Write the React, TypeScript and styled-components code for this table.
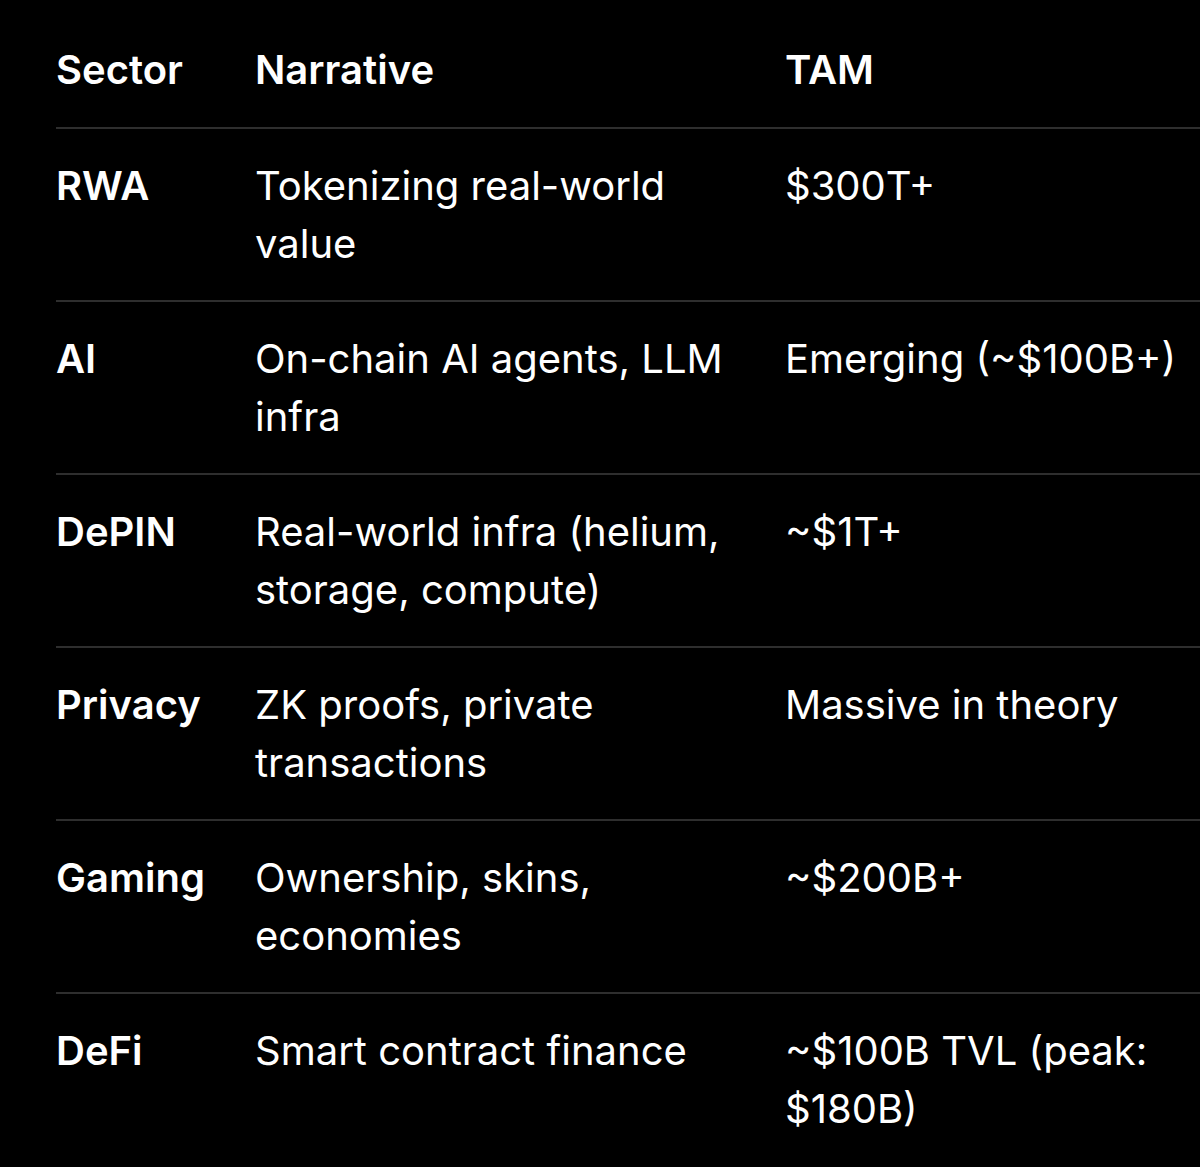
import React from "react";
import styled, { createGlobalStyle } from "styled-components";

type Row = {
  sector: string;
  narrative: string;
  tam: string;
};

const rows: Row[] = [
  { sector: "RWA", narrative: "Tokenizing real-world value", tam: "$300T+" },
  { sector: "AI", narrative: "On-chain AI agents, LLM infra", tam: "Emerging (~$100B+)" },
  { sector: "DePIN", narrative: "Real-world infra (helium, storage, compute)", tam: "~$1T+" },
  { sector: "Privacy", narrative: "ZK proofs, private transactions", tam: "Massive in theory" },
  { sector: "Gaming", narrative: "Ownership, skins, economies", tam: "~$200B+" },
  { sector: "DeFi", narrative: "Smart contract finance", tam: "~$100B TVL (peak: $180B)" },
];

const GlobalStyle = createGlobalStyle`
  html, body {
    margin: 0;
    padding: 0;
    background: #000;
  }
  body {
    font-family: Inter, "Noto Sans", "Liberation Sans", sans-serif;
    color: #fff;
    -webkit-font-smoothing: antialiased;
  }
`;

function App() {
  return (
    <>
      <GlobalStyle />
      <Table>
        <Line $head>
          <Cell $bold>Sector</Cell>
          <Cell $bold>Narrative</Cell>
          <Cell $bold>TAM</Cell>
        </Line>
        {rows.map((row, i) => (
          <Line key={row.sector} $last={i === rows.length - 1}>
            <Cell $bold>{row.sector}</Cell>
            <Cell>{row.narrative}</Cell>
            <Cell>{row.tam}</Cell>
          </Line>
        ))}
      </Table>
    </>
  );
}

const Table = styled.main`
  display: flex;
  flex-direction: column;
  padding-left: 56px;
  width: 1200px;
  box-sizing: border-box;
  background: #000;
`;

const Line = styled.div<{ $head?: boolean; $last?: boolean }>`
  display: grid;
  grid-template-columns: 199px 530px 1fr;
  padding: ${(p) => (p.$head ? "41px 0 28px" : p.$last ? "28px 0 30px" : "28px 0 27px")};
  border-bottom: ${(p) => (p.$last ? "none" : "2px solid #2e2e2e")};
`;

const Cell = styled.div<{ $bold?: boolean }>`
  font-size: 40px;
  line-height: 58px;
  font-weight: ${(p) => (p.$bold ? 600 : 400)};
  padding-right: 28px;

  &:last-child {
    padding-right: 0;
  }
`;

export default App;
